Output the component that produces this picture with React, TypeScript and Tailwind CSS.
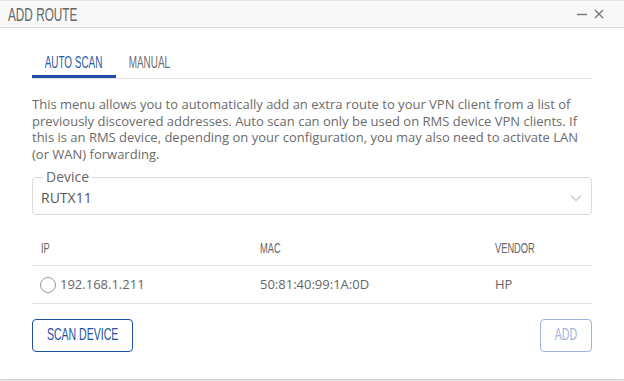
import { ReactNode } from 'react'

// condensed headline text: no condensed family installed, so squeeze Liberation Sans
function Cond({ children, className = '' }: { children: ReactNode; className?: string }) {
  return (
    <span className={`inline-block whitespace-nowrap font-['Liberation_Sans',sans-serif] scale-x-[0.62] ${className}`}>
      {children}
    </span>
  )
}

const ROWS = [{ ip: '192.168.1.211', mac: '50:81:40:99:1A:0D', vendor: 'HP' }]

export default function App() {
  return (
    <div className="w-[624px] h-[381px] bg-[#ececec] font-['Open_Sans',sans-serif]">
      <div className="h-[379px] bg-white border-t border-[#e6e6e6] shadow-[0_1px_2px_rgba(0,0,0,0.15)] flex flex-col">
        {/* Title bar */}
        <div className="h-[27px] bg-[#f8f8f8] border-b border-[#dedede] flex items-center justify-between pl-2 pr-[20px]">
          <Cond className="origin-left text-[19px] text-[#666] leading-none">ADD ROUTE</Cond>
          <div className="flex items-center gap-[7px] text-[#777]">
            <svg width="10" height="10" viewBox="0 0 10 10">
              <path d="M0 5.5h10" stroke="currentColor" strokeWidth="1.4" />
            </svg>
            <svg width="10" height="10" viewBox="0 0 10 10">
              <path d="M1 1l8 8M9 1l-8 8" stroke="currentColor" strokeWidth="1.4" />
            </svg>
          </div>
        </div>

        <div className="px-8 pt-[22px]">
          {/* Tabs */}
          <div className="flex border-b border-[#e2e2e2]">
            <div className="w-[84px] h-[28px] border-b-[3px] border-[#1f4fa5] flex items-center justify-center">
              <Cond className="text-[16px] text-[#2b58aa]">AUTO SCAN</Cond>
            </div>
            <div className="w-[66px] h-[28px] flex items-center justify-center pb-[3px]">
              <Cond className="text-[16px] text-[#6f6f6f]">MANUAL</Cond>
            </div>
          </div>

          <p className="mt-[17px] text-[13px] leading-[16.5px] text-[#6b6b6b]">
            This menu allows you to automatically add an extra route to your VPN client from a list of
            previously discovered addresses. Auto scan can only be used on RMS device VPN clients. If
            this is an RMS device, depending on your configuration, you may also need to activate LAN
            (or WAN) forwarding.
          </p>

          {/* Device select */}
          <fieldset className="mt-[8px] h-[45px] border border-[#dcdcdc] rounded-[4px] px-2 flex items-start justify-between">
            <legend className="ml-[2px] px-[3px] text-[14px] leading-[14px] text-[#666]">Device</legend>
            <span className="text-[14px] leading-[18px] text-[#555] mt-[5px]">RUTX11</span>
            <svg width="12" height="8" viewBox="0 0 12 8" className="mt-[10px] mr-[1px] text-[#999]">
              <path d="M1 1.5l5 5 5-5" fill="none" stroke="currentColor" strokeWidth="1" />
            </svg>
          </fieldset>

          {/* Table */}
          <table className="mt-[13px] w-full border-collapse">
            <thead>
              <tr className="h-[37px] border-b border-[#e2e2e2] text-left">
                <th className="w-[219px] pl-[9px] pt-[2px] font-normal">
                  <Cond className="origin-left text-[15px] text-[#666]">IP</Cond>
                </th>
                <th className="w-[235px] pl-[9px] pt-[2px] font-normal">
                  <Cond className="origin-left text-[15px] text-[#666]">MAC</Cond>
                </th>
                <th className="pl-[9px] pt-[2px] font-normal">
                  <Cond className="origin-left text-[15px] text-[#666]">VENDOR</Cond>
                </th>
              </tr>
            </thead>
            <tbody>
              {ROWS.map(r => (
                <tr key={r.ip} className="h-[38px] border-b border-[#e2e2e2] text-[13px] text-[#666]">
                  <td className="pl-2 pt-[2px]">
                    <span className="flex items-center gap-1">
                      <span className="w-4 h-4 rounded-full border border-[#9a9a9a]" />
                      {r.ip}
                    </span>
                  </td>
                  <td className="pl-[9px] pt-[2px]">{r.mac}</td>
                  <td className="pl-[9px] pt-[2px]">{r.vendor}</td>
                </tr>
              ))}
            </tbody>
          </table>

          {/* Actions */}
          <div className="mt-[15px] flex justify-between">
            <button className="w-[101px] h-[33px] border border-[#1f4fa5] rounded-[4px] flex items-center justify-center">
              <Cond className="text-[17px] text-[#2450a3]">SCAN DEVICE</Cond>
            </button>
            <button className="w-[52px] h-[33px] border border-[#9db3dd] rounded-[4px] flex items-center justify-center">
              <Cond className="text-[17px] text-[#9db3dd]">ADD</Cond>
            </button>
          </div>
        </div>
      </div>
    </div>
  )
}
